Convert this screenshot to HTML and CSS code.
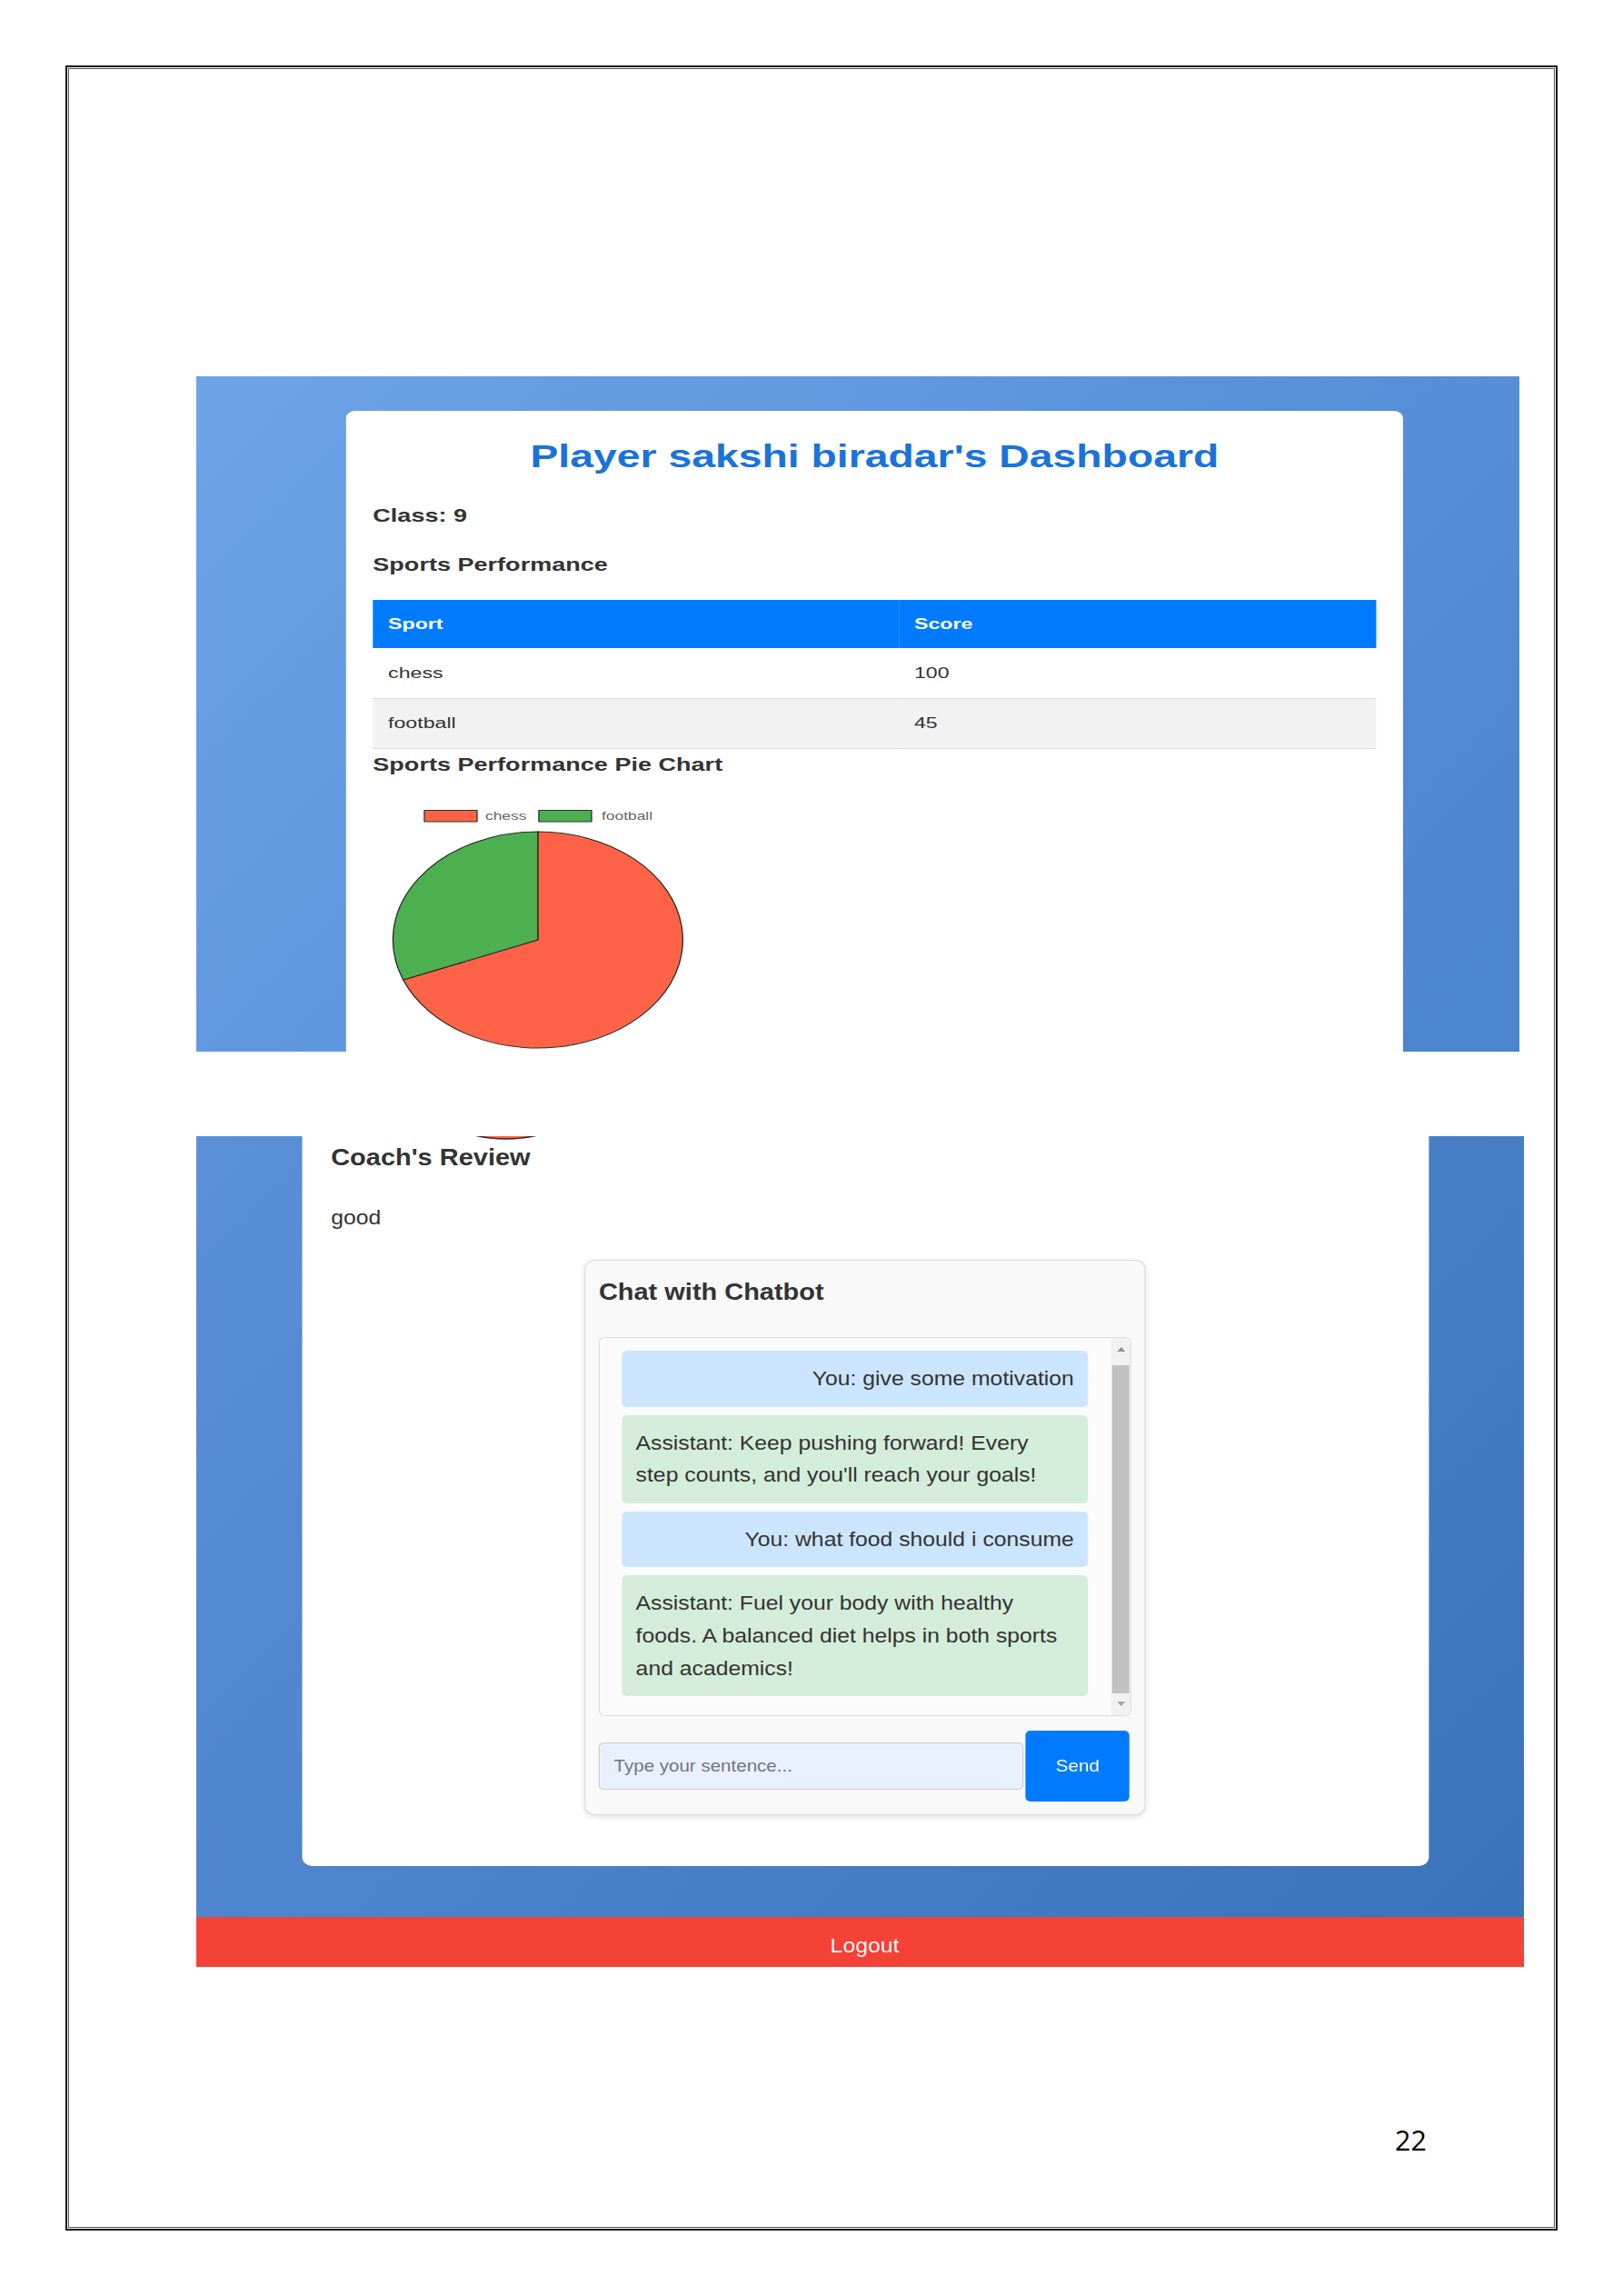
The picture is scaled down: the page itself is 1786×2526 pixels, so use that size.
FILE: index.html
```html
<!DOCTYPE html>
<html lang="en">
<head>
<meta charset="utf-8">
<title>Player Dashboard</title>
<link rel="stylesheet" href="styles.css">
</head>
<body>
<div class="page">
  <div class="shot shot-top">
    <div class="shot-inner top-inner">
      <div class="top-card">
        <h1 class="title">Player sakshi biradar's Dashboard</h1>
        <h3 class="label">Class: 9</h3>
        <h3 class="label sec">Sports Performance</h3>
        <table class="perf">
          <thead>
            <tr><th class="c1">Sport</th><th>Score</th></tr>
          </thead>
          <tbody>
            <tr><td>chess</td><td>100</td></tr>
            <tr class="alt"><td>football</td><td>45</td></tr>
          </tbody>
        </table>
        <h3 class="label pie-title">Sports Performance Pie Chart</h3>
        <svg class="pie" viewBox="0 0 271 275" width="271" height="275">
          <rect x="42.3" y="10.5" width="43.3" height="12.5" fill="#ff6347" stroke="#333" stroke-width="1"/>
          <text class="legend-text" x="92.3" y="21">chess</text>
          <rect x="136.3" y="10.5" width="43.3" height="12.5" fill="#4caf50" stroke="#333" stroke-width="1"/>
          <text class="legend-text" x="187.8" y="21">football</text>
          <path d="M135.5 153 L135.5 34 A119 119 0 1 1 24.95 197.04 Z" fill="#ff6347" stroke="#2b2b2b" stroke-width="1"/>
          <path d="M135.5 153 L24.95 197.04 A119 119 0 0 1 135.5 34 Z" fill="#4caf50" stroke="#2b2b2b" stroke-width="1"/>
        </svg>
      </div>
    </div>
  </div>

  <div class="shot shot-bottom">
    <div class="shot-inner bottom-inner">
      <div class="bottom-card">
        <svg class="arc" viewBox="0 0 70 5" width="70" height="5">
          <circle cx="35" cy="-121" r="124" fill="#ff6347" stroke="#3a2626" stroke-width="1.5"/>
        </svg>
        <h3 class="coach">Coach's Review</h3>
        <p class="review">good</p>
        <div class="chat">
          <h3 class="chat-h">Chat with Chatbot</h3>
          <div class="msgs">
            <div class="msg-list">
              <div class="bubble user">You: give some motivation</div>
              <div class="bubble bot">Assistant: Keep pushing forward! Every step counts, and you'll reach your goals!</div>
              <div class="bubble user">You: what food should i consume</div>
              <div class="bubble bot">Assistant: Fuel your body with healthy foods. A balanced diet helps in both sports and academics!</div>
            </div>
            <div class="scrollbar">
              <div class="sb-btn sb-up"><span class="tri-up"></span></div>
              <div class="sb-thumb"></div>
              <div class="sb-btn sb-down"><span class="tri-down"></span></div>
            </div>
          </div>
          <div class="input-row">
            <input class="chat-input" type="text" placeholder="Type your sentence...">
            <button class="send" type="button">Send</button>
          </div>
        </div>
      </div>
      <div class="logout">Logout</div>
    </div>
  </div>

  <div class="pagenum">22</div>
</div>
</body>
</html>
```

FILE: styles.css
```css
* {
  box-sizing: border-box;
}

body {
  margin: 0;
  background: #ffffff;
  font-family: "Liberation Sans", Arial, sans-serif;
}

.page {
  margin: 72px 0 0 72px;
  width: 1642px;
  height: 2382px;
  border: 2px solid #111;
  box-shadow: inset 0 0 0 1px #fff, inset 0 0 0 2px #555;
  padding: 340px 0 0 142px;
}

.shot {
  overflow: hidden;
}

.shot-inner {
  transform-origin: 0 0;
}

/* ---------- top screenshot ---------- */
.shot-top {
  width: 1456px;
  height: 743px;
  margin-bottom: 93px;
  background: linear-gradient(135deg, #6ea3e7 0%, #5b93db 50%, #4a84cc 100%);
}

.top-inner {
  width: 1086.6px;
  transform: scaleX(1.34);
  padding-top: 38px;
}

.top-card {
  margin-left: 123px;
  width: 868px;
  height: 800px;
  background: #fff;
  border-radius: 8px;
  padding: 22px 22px 0;
}

.title {
  margin: 7.5px 0 0;
  font-size: 34.6px;
  line-height: 40px;
  font-weight: bold;
  text-align: center;
  color: #1a73d8;
}

.label {
  margin: 33px 0 0;
  font-size: 20.2px;
  line-height: 24px;
  font-weight: bold;
  color: #333;
}

.label.sec {
  margin-top: 30px;
}

.label.pie-title {
  margin-top: 5px;
}

.perf {
  margin-top: 27.5px;
  width: 100%;
  border-collapse: collapse;
  font-size: 17.3px;
}

.perf th {
  height: 53px;
  padding: 0 0 0 12.5px;
  background: #007bff;
  color: #fff;
  font-weight: bold;
  text-align: left;
}

.perf th.c1 {
  width: 432px;
}

.perf td {
  height: 55px;
  padding: 0 0 0 12.5px;
  border-bottom: 1px solid #ddd;
  color: #333;
}

.perf tr.alt td {
  background: #f2f2f2;
}

.pie {
  display: block;
  margin-top: 28px;
  width: 271px;
  height: 275px;
}

.legend-text {
  font-family: "Liberation Sans", Arial, sans-serif;
  font-size: 13px;
  fill: #666;
}

/* ---------- bottom screenshot ---------- */
.shot-bottom {
  width: 1461px;
  height: 914px;
  background: linear-gradient(135deg, #5a90d8 0%, #4a82c9 50%, #3a72b9 100%);
}

.bottom-inner {
  width: 1316.2px;
  transform: scaleX(1.11);
}

.bottom-card {
  margin-left: 104.5px;
  width: 1117.1px;
  background: #fff;
  border-radius: 0 0 10px 10px;
  padding: 0 29px 56px;
}

.arc {
  display: block;
  margin-left: 138.6px;
  width: 70px;
  height: 5px;
}

.coach {
  margin: 3.4px 0 0;
  font-size: 26.1px;
  line-height: 30px;
  font-weight: bold;
  color: #333;
}

.review {
  margin: 36.9px 0 0;
  font-size: 22.3px;
  line-height: 30px;
  color: #333;
}

.chat {
  margin: 30.7px auto 0;
  width: 556.7px;
  border: 1px solid #ddd;
  border-radius: 10px;
  background: #f9f9f9;
  padding: 14px 13.3px;
  box-shadow: 0 2px 6px rgba(0, 0, 0, 0.12);
}

.chat-h {
  margin: 5px 0 0;
  font-size: 26.1px;
  line-height: 30px;
  font-weight: bold;
  color: #333;
}

.msgs {
  margin-top: 35px;
  height: 417px;
  border: 1px solid #ddd;
  border-radius: 6px;
  background: #fbfbfb;
  display: flex;
  overflow: hidden;
}

.msg-list {
  flex: 1;
  padding: 14px 23px 0 21.7px;
}

.bubble {
  padding: 13px 14px;
  margin-bottom: 9px;
  border-radius: 5px;
  font-size: 22.3px;
  line-height: 35.6px;
  color: #333;
}

.bubble.user {
  background: #cce5ff;
  text-align: right;
}

.bubble.bot {
  background: #d4edda;
}

.scrollbar {
  width: 19px;
  background: #f1f1f1;
  display: flex;
  flex-direction: column;
  align-items: center;
}

.sb-btn {
  width: 100%;
  display: flex;
  align-items: center;
  justify-content: center;
}

.sb-up {
  height: 26px;
}

.sb-down {
  height: 24px;
}

.tri-up {
  width: 0;
  height: 0;
  border-left: 4px solid transparent;
  border-right: 4px solid transparent;
  border-bottom: 5px solid #8f8f8f;
}

.tri-down {
  width: 0;
  height: 0;
  border-left: 4px solid transparent;
  border-right: 4px solid transparent;
  border-top: 5px solid #a3a3a3;
}

.sb-thumb {
  margin-top: 4px;
  width: 17px;
  height: 361px;
  background: #c1c1c1;
}

.input-row {
  margin-top: 16px;
  display: flex;
  align-items: center;
  gap: 2px;
}

.chat-input {
  width: 421.4px;
  height: 52px;
  border: 1px solid #ccc;
  border-radius: 5px;
  background: #e8f0fe;
  padding: 0 14px;
  font-family: "Liberation Sans", Arial, sans-serif;
  font-size: 18.5px;
  color: #333;
  outline: none;
}

.chat-input::placeholder {
  color: #757575;
}

.send {
  width: 102.7px;
  height: 78px;
  border: 0;
  border-radius: 5px;
  padding: 0;
  background: #007bff;
  color: #fff;
  font-family: "Liberation Sans", Arial, sans-serif;
  font-size: 18.5px;
}

.logout {
  margin-top: 56px;
  height: 55px;
  padding: 10px 0 0 9px;
  background: #f44336;
  color: #fff;
  font-size: 22.3px;
  display: flex;
  align-items: center;
  justify-content: center;
}

.pagenum {
  margin: 170px 0 0 1319px;
  font-family: "Open Sans", "Liberation Sans", sans-serif;
  font-size: 30.4px;
  color: #000;
}
```
